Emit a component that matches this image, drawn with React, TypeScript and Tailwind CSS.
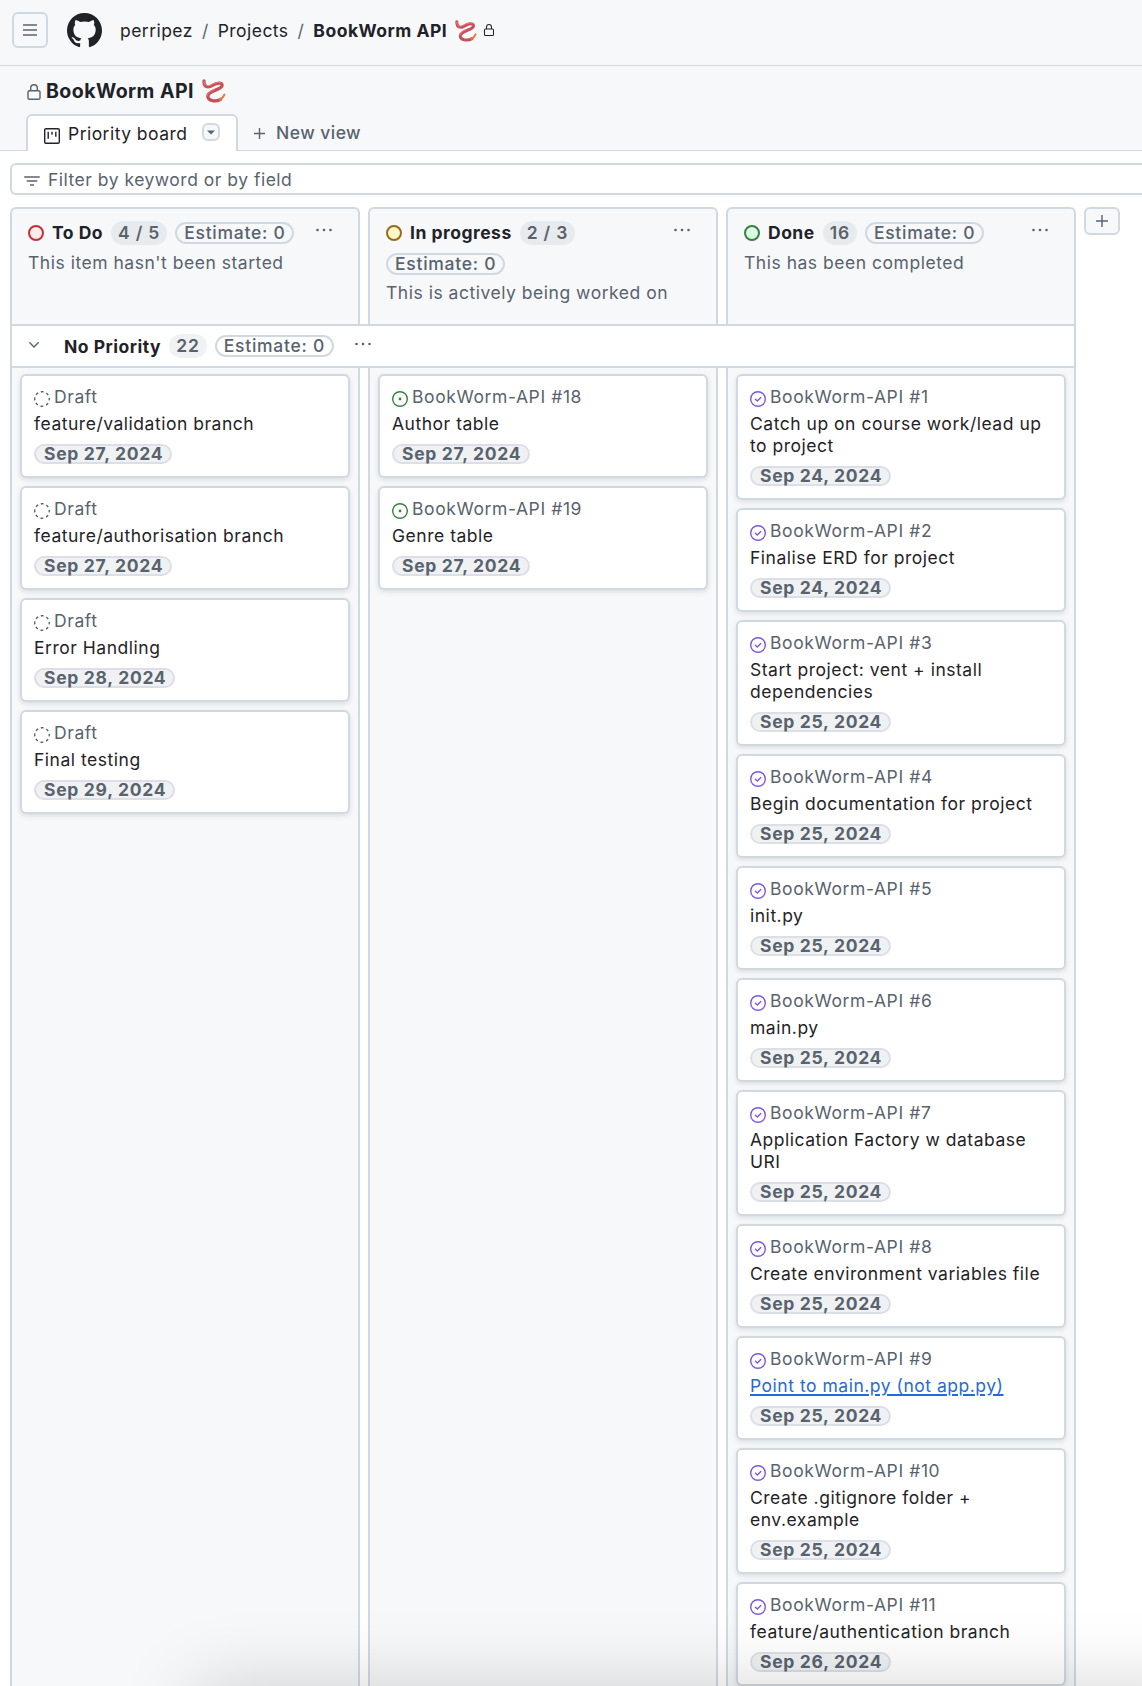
import React from "react";

type Card = { ref: string; title: string; date: string; link?: boolean };

const LINE = "border-[#d1d9e0]";

function Lock({ size }: { size: number }) {
  return (
    <svg width={size} height={size} viewBox="0 0 16 16" fill="none" stroke="currentColor" strokeWidth="1.4" className="shrink-0">
      <rect x="2" y="6.7" width="12" height="8.6" rx="1.4" />
      <path d="M4.7 6.7V4a3.3 3.3 0 0 1 6.6 0v2.7" />
    </svg>
  );
}

function Worm({ size }: { size: number }) {
  return (
    <svg width={size} height={size} viewBox="0 0 24 24" fill="none" strokeLinecap="round" strokeLinejoin="round" className="shrink-0">
      <path d="M2 2C1.800 8.200 6 9.200 10.500 6.400c4.500-2.900 9.800-3.400 9.600.2C19.800 11 6 11.500 5.800 17c-.1 5.400 8.500 6 12.700 3.300" stroke="#c94f57" strokeWidth="3.300" />
      <path d="M18 20.500c2-1 3.400-2.500 4.400-4.900" stroke="#e57a48" strokeWidth="2.100" />
      <path d="M2 2.400C2 7 5.800 8 9.800 5.500c4-2.400 8.300-3 9.500-1.300M5.400 16.300c.5-3 4-4.700 7-6" stroke="#e48d8f" strokeWidth=".9" />
    </svg>
  );
}

function Dots() {
  return (
    <svg width="16" height="4" viewBox="0 0 16 4" fill="#59636e" className="shrink-0">
      <circle cx="1.500" cy="2" r="1.300" /><circle cx="8" cy="2" r="1.300" /><circle cx="14.500" cy="2" r="1.300" />
    </svg>
  );
}

function StateIcon({ kind }: { kind: "draft" | "open" | "done" }) {
  if (kind === "draft")
    return (
      <svg width="16" height="16" viewBox="0 0 16 16" fill="none" stroke="#59636e" strokeWidth="1.400" className="mt-[5px] shrink-0">
        <circle cx="8" cy="8" r="7.300" strokeDasharray="2.900 2.833" strokeDashoffset="1.450" />
      </svg>
    );
  if (kind === "open")
    return (
      <svg width="16" height="16" viewBox="0 0 16 16" fill="none" stroke="#37803f" strokeWidth="1.400" className="mt-[5px] shrink-0">
        <circle cx="8" cy="8" r="7.300" />
        <circle cx="8" cy="8" r="1.400" fill="#37803f" stroke="none" />
      </svg>
    );
  return (
    <svg width="16" height="16" viewBox="0 0 16 16" fill="none" stroke="#8058d8" strokeWidth="1.400" className="mt-[5px] shrink-0">
      <circle cx="8" cy="8" r="7.300" />
      <path d="m5.400 8.200 1.900 1.800 3.500-3.500" strokeLinecap="round" strokeLinejoin="round" />
    </svg>
  );
}

function Estimate() {
  return (
    <span className={`flex h-[22px] items-center rounded-full border-2 ${LINE} px-[7px] leading-[18px] font-medium tracking-[0.74px] whitespace-nowrap text-[#59636e]`}>
      Estimate: 0
    </span>
  );
}

function BoardCard({ card, kind }: { card: Card; kind: "draft" | "open" | "done" }) {
  return (
    <article className={`rounded-md border-2 ${LINE} bg-white px-3 pt-[10px] pb-3 shadow-[0_2px_5px_rgba(37,41,46,0.12)]`}>
      <div className="flex h-[22px] gap-1 leading-[22px] tracking-[0.6px] text-[#59636e]">
        <StateIcon kind={kind} />
        {card.ref}
      </div>
      <div className={`mt-[5px] leading-[22px] tracking-[0.52px] ${card.link ? "text-[#246bd6] underline decoration-2 underline-offset-2" : "text-[#1f2328]"}`}>
        {card.title}
      </div>
      <div className="mt-[9px] flex">
        <span className="flex h-5 items-center rounded-full border-2 border-[#dcdfe7] bg-[#eff1f3] pr-[7px] pl-2 leading-5 font-bold tracking-[0.7px] whitespace-nowrap text-[#59636e]">
          {card.date}
        </span>
      </div>
    </article>
  );
}

const columns: {
  name: string; count: string; note: string; ring: string; kind: "draft" | "open" | "done"; cards: Card[];
}[] = [
  {
    name: "To Do", count: "4 / 5", note: "This item hasn't been started", ring: "border-[#c62f36] bg-[#ffebe9]", kind: "draft",
    cards: [
      { ref: "Draft", title: "feature/validation branch", date: "Sep 27, 2024" },
      { ref: "Draft", title: "feature/authorisation branch", date: "Sep 27, 2024" },
      { ref: "Draft", title: "Error Handling", date: "Sep 28, 2024" },
      { ref: "Draft", title: "Final testing", date: "Sep 29, 2024" },
    ],
  },
  {
    name: "In progress", count: "2 / 3", note: "This is actively being worked on", ring: "border-[#9a6a1a] bg-[#fff8c5]", kind: "open",
    cards: [
      { ref: "BookWorm-API #18", title: "Author table", date: "Sep 27, 2024" },
      { ref: "BookWorm-API #19", title: "Genre table", date: "Sep 27, 2024" },
    ],
  },
  {
    name: "Done", count: "16", note: "This has been completed", ring: "border-[#37803f] bg-[#dafbe1]", kind: "done",
    cards: [
      { ref: "BookWorm-API #1", title: "Catch up on course work/lead up to project", date: "Sep 24, 2024" },
      { ref: "BookWorm-API #2", title: "Finalise ERD for project", date: "Sep 24, 2024" },
      { ref: "BookWorm-API #3", title: "Start project: vent + install dependencies", date: "Sep 25, 2024" },
      { ref: "BookWorm-API #4", title: "Begin documentation for project", date: "Sep 25, 2024" },
      { ref: "BookWorm-API #5", title: "init.py", date: "Sep 25, 2024" },
      { ref: "BookWorm-API #6", title: "main.py", date: "Sep 25, 2024" },
      { ref: "BookWorm-API #7", title: "Application Factory w database URI", date: "Sep 25, 2024" },
      { ref: "BookWorm-API #8", title: "Create environment variables file", date: "Sep 25, 2024" },
      { ref: "BookWorm-API #9", title: "Point to main.py (not app.py)", date: "Sep 25, 2024", link: true },
      { ref: "BookWorm-API #10", title: "Create .gitignore folder + env.example", date: "Sep 25, 2024" },
      { ref: "BookWorm-API #11", title: "feature/authentication branch", date: "Sep 26, 2024" },
    ],
  },
];

export default function App() {
  return (
    <div className="relative flex h-[1686px] w-[1142px] flex-col overflow-hidden bg-white font-[Inter,sans-serif] text-[17.5px] tracking-[0.46px] text-[#1f2328]">
      <header className={`flex h-[66px] shrink-0 items-start border-b ${LINE} bg-[#f6f8fa] pt-3 pl-3`}>
        <button className={`flex size-9 items-center justify-center rounded-md border-2 ${LINE}`}>
          <svg width="14" height="12" viewBox="0 0 14 12" stroke="#59636e" strokeWidth="1.300"><path d="M0 1h14M0 6h14M0 11h14" /></svg>
        </button>
        <svg width="35" height="35" viewBox="0 0 16 16" fill="#1f2328" className="mt-px ml-[19px]">
          <path d="M8 0c4.420 0 8 3.580 8 8a8.013 8.013 0 0 1-5.450 7.590c-.4.080-.55-.17-.55-.38 0-.27.010-1.130.010-2.200 0-.75-.25-1.230-.54-1.480 1.780-.2 3.650-.88 3.650-3.950 0-.88-.31-1.590-.82-2.150.080-.2.360-1.020-.080-2.120 0 0-.67-.22-2.200.820-.64-.18-1.320-.27-2-.27-.68 0-1.360.090-2 .270-1.530-1.030-2.200-.82-2.200-.82-.44 1.100-.16 1.920-.080 2.120-.51.560-.82 1.280-.82 2.150 0 3.060 1.860 3.750 3.640 3.950-.23.200-.44.550-.51 1.070-.46.210-1.610.550-2.330-.66-.15-.24-.6-.83-1.230-.82-.67.010-.27.380.010.530.340.190.730.900.820 1.130.160.450.680 1.310 2.690.940 0 .670.010 1.300.010 1.490 0 .210-.15.450-.55.380A7.995 7.995 0 0 1 0 8c0-4.420 3.580-8 8-8Z" />
        </svg>
        <nav className="mt-px ml-[18px] flex h-9 items-center">
          <span>perripez</span>
          <span className="mx-[9px] text-[#59636e]">/</span>
          <span>Projects</span>
          <span className="mx-[9px] text-[#59636e]">/</span>
          <span className="mr-[8px] font-bold tracking-[0.5px]">BookWorm API</span>
          <Worm size={22} />
          <span className="-mt-[2px] ml-[6px]"><Lock size={12} /></span>
        </nav>
      </header>

      <section className="flex h-[85px] shrink-0 flex-col bg-[#f6f8fa] shadow-[inset_0_-1px_0_#d1d9e0]">
        <div className="flex h-12 items-center gap-[4px] pt-[3px] pl-[26px]">
          <span className="text-[#59636e]"><Lock size={16} /></span>
          <h1 className="text-[19.5px] font-bold tracking-[0.45px]">BookWorm API</h1>
          <span className="-mt-[2px] ml-1"><Worm size={24} /></span>
        </div>
        <div className="flex h-[37px] pl-[26px]">
          <div className={`flex w-[212px] items-start rounded-t-md border-2 border-b-0 ${LINE} bg-white pl-4`}>
            <svg width="16" height="16" viewBox="0 0 16 16" fill="none" stroke="#1f2328" strokeWidth="1.400" className="mt-3">
              <rect x=".7" y=".7" width="14.600" height="14.600" rx="1.300" /><path d="M4.200 3.800v7M8 3.800v3M11.800 3.800v5" />
            </svg>
            <span className="ml-2 mt-[5px] leading-[26px] whitespace-nowrap">Priority board</span>
            <span className={`ml-auto mt-[7px] mr-4 flex size-[18px] items-center justify-center rounded-md border-2 ${LINE} bg-[#f6f8fa]`}>
              <svg width="8" height="5" viewBox="0 0 8 5" fill="#59636e" className="shrink-0"><path d="M0 .5h8L4 4.500z" /></svg>
            </span>
          </div>
          <div className="ml-4 flex h-10 items-start text-[#59636e]">
            <svg width="11" height="11" viewBox="0 0 11 11" stroke="#59636e" strokeWidth="1.400" className="mt-[14px]"><path d="M5.500 0v11M0 5.500h11" /></svg>
            <span className="ml-[11px] mt-[6px] leading-[26px] font-medium">New view</span>
          </div>
        </div>
      </section>

      <div className={`mt-3 ml-[10px] flex h-8 shrink-0 items-center rounded-l-md border-2 border-r-0 ${LINE} pl-3 text-[#59636e]`}>
        <svg width="16" height="10" viewBox="0 0 16 10" stroke="#59636e" strokeWidth="1.300" strokeLinecap="round" className="mt-1"><path d="M.7 1h14.600M3.200 5h9.600M6.500 9h3" /></svg>
        <span className="mt-[3px] ml-2 tracking-[0.5px]">Filter by keyword or by field</span>
      </div>

      <div className="mt-3 ml-[10px] flex shrink-0 gap-2">
        {columns.map((c) => (
          <div key={c.name} className={`h-[117px] w-[350px] shrink-0 rounded-t-md border-2 border-b-0 ${LINE} bg-[#f6f8fa] px-4 pt-3`}>
            <div className="flex items-start">
              <div className="flex w-[272px] flex-wrap items-center gap-x-2 gap-y-[8px]">
                <span className={`size-4 rounded-full border-2 ${c.ring}`} />
                <span className="leading-6 font-bold tracking-[0.5px]">{c.name}</span>
                <span className="flex h-6 items-center rounded-full bg-[#e8ebee] px-[7px] font-semibold tracking-[0.8px] text-[#59636e]">{c.count}</span>
                <Estimate />
              </div>
              <div className="mt-[7px] ml-4"><Dots /></div>
            </div>
            <div className="mt-[7px] leading-[22px] tracking-[0.52px] text-[#59636e]">{c.note}</div>
          </div>
        ))}
        <button className={`flex h-7 w-9 items-center justify-center rounded-md border-2 ${LINE} bg-[#f6f8fa]`}>
          <svg width="12" height="12" viewBox="0 0 12 12" stroke="#59636e" strokeWidth="1.400"><path d="M6 0v12M0 6h12" /></svg>
        </button>
      </div>

      <div className={`ml-[10px] flex h-11 w-[1066px] shrink-0 items-center border-2 ${LINE} bg-white pl-[17px]`}>
        <svg width="10" height="6" viewBox="0 0 10 6" fill="none" stroke="#59636e" strokeWidth="1.400" strokeLinecap="round" className="-mt-[2px]"><path d="m.8.800 4.200 4.200L9.200.8" /></svg>
        <span className="mt-[2px] ml-[25px] font-bold tracking-[0.5px]">No Priority</span>
        <span className="mx-2 flex h-6 items-center rounded-full bg-[#eff1f3] px-[7px] font-semibold tracking-[0.9px] text-[#59636e]">22</span>
        <Estimate />
        <span className="-mt-1 ml-[21px]"><Dots /></span>
      </div>

      <div className="ml-[10px] flex min-h-0 flex-1 gap-2">
        {columns.map((c) => (
          <div key={c.name} className={`flex w-[350px] shrink-0 flex-col gap-2 border-x-2 ${LINE} bg-[#f6f8fa] px-2 pt-[6px]`}>
            {c.cards.map((card) => <BoardCard key={card.ref + card.title} card={card} kind={c.kind} />)}
          </div>
        ))}
      </div>

      <div className="pointer-events-none absolute top-[1686px] -right-[80px] left-[195px] h-[200px] shadow-[0_0_76px_rgba(0,0,0,0.17)]" />
    </div>
  );
}
